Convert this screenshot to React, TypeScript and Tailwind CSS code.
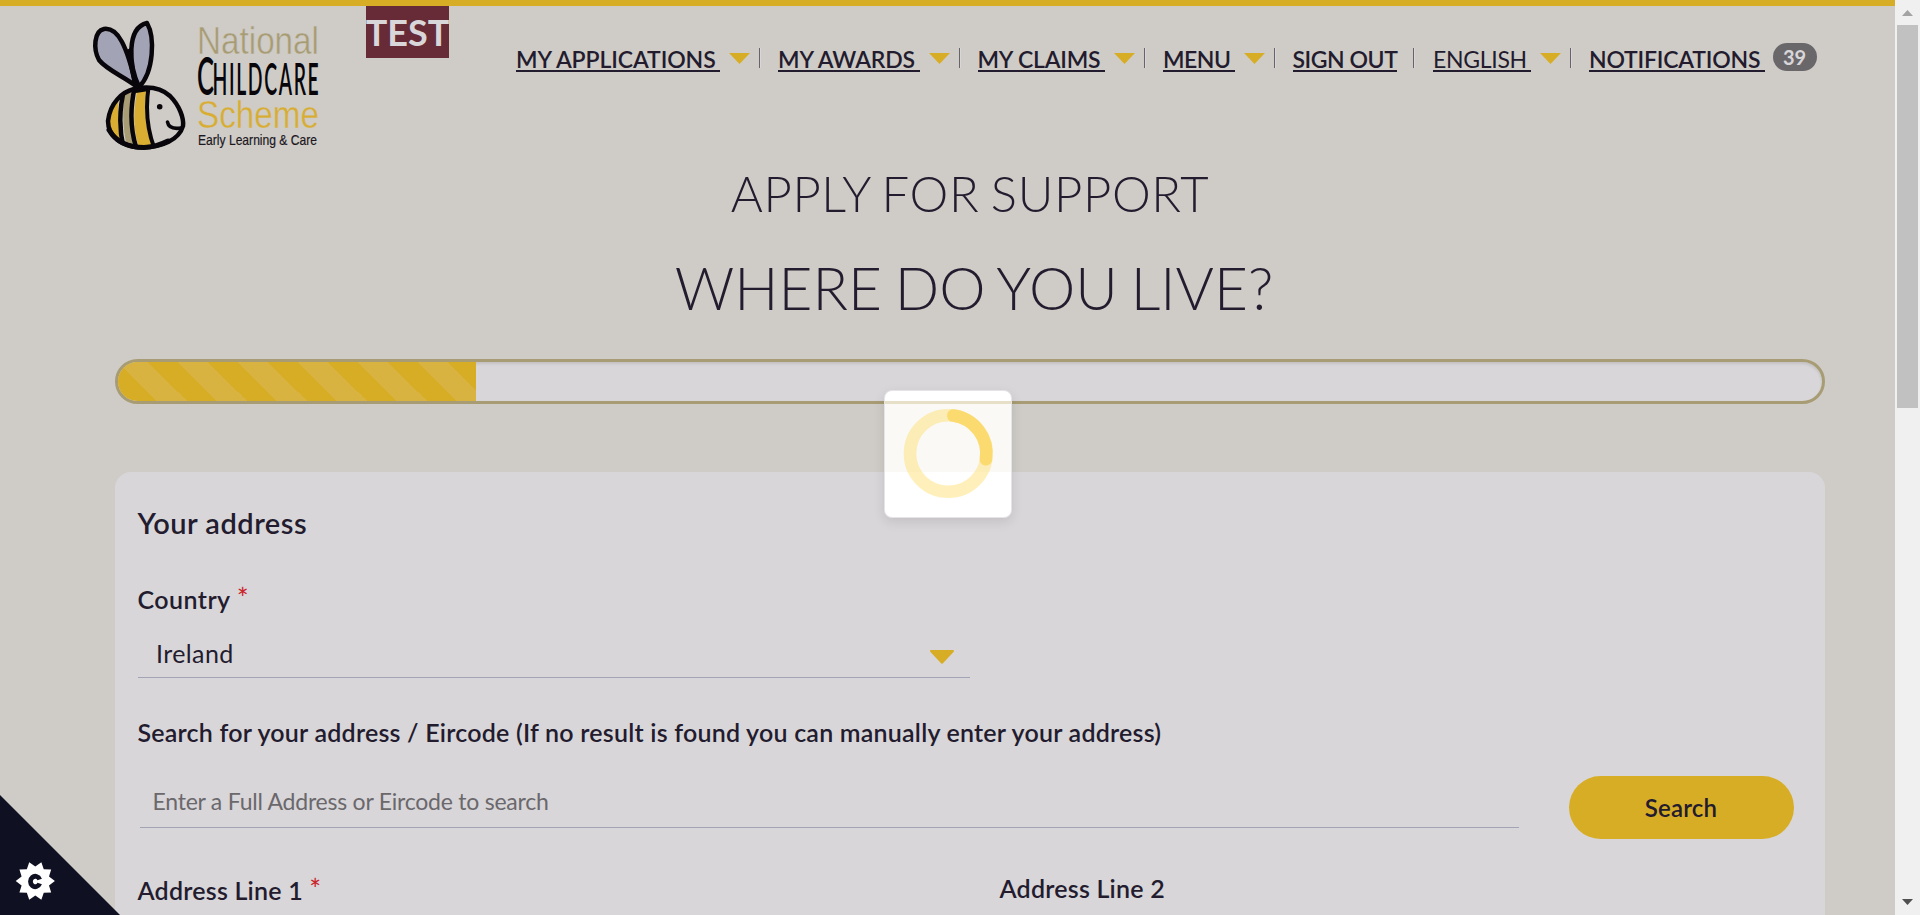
import React from "react";

type NavItem = { label: string; link: string; menu?: boolean; last?: boolean };

const navItems: NavItem[] = [
  { label: "MY APPLICATIONS", link: "w-[204px] font-semibold tracking-[-0.1px]", menu: true },
  { label: "MY AWARDS", link: "w-[141.500px] font-semibold tracking-[-0.15px]", menu: true },
  { label: "MY CLAIMS", link: "w-[127.500px] font-semibold tracking-[-0.2px]", menu: true },
  { label: "MENU", link: "w-[71.500px] font-semibold tracking-[-0.5px]", menu: true },
  { label: "SIGN OUT", link: "w-[104.500px] font-semibold tracking-[-0.45px]" },
  { label: "ENGLISH", link: "w-[98px] font-normal tracking-[-0.3px]", menu: true },
  { label: "NOTIFICATIONS", link: "w-[175.500px] font-semibold tracking-[-0.2px]", last: true },
];

function Logo() {
  return (
    <svg className="block h-[136px] w-[250px]" viewBox="80 16 250 136" aria-label="National Childcare Scheme">
      <defs>
        <clipPath id="body">
          <path d="M108 121C107 103 128 87 150 87C170 88 183 106 184 121C183 139 164 148 145 148C124 148 109 138 108 121Z" />
        </clipPath>
      </defs>
      <g stroke="#08060a" strokeLinejoin="round" strokeLinecap="round" strokeWidth="4.5">
        <path d="M136 86C123 76 107 70 99 60C93 49 94 31 104 29C118 27 127 46 136 86Z" fill="#a3a3b6" />
        <path d="M139 87C129 66 126 28 147 23C155 37 154 72 139 87Z" fill="#a3a3b6" />
        <path d="M127 51L131 49L134 72L139 86L134 85Z" fill="#08060a" strokeWidth="2" />
      </g>
      <g clipPath="url(#body)">
        <path d="M100 85H120C117 105 118 132 122 150H100Z" fill="#d8ad32" />
        <path d="M126 84H134C130 108 131 130 138 150H128C122 130 122 106 126 84Z" fill="#a89c74" />
        <path d="M139 84H147C143 108 145 130 154 150H140C132 130 133 106 139 84Z" fill="#d8ad32" />
        <g fill="none" stroke="#08060a" strokeWidth="4.5">
          <path d="M125 86C119 108 119 130 124 150" />
          <path d="M135 86C130 108 130 130 137 150" />
          <path d="M149 84C145 108 147 130 155 150" strokeWidth="4" />
          <path d="M134 91L147 89" />
        </g>
      </g>
      <g fill="none" stroke="#08060a" strokeLinecap="round">
        <path d="M108 121C110 103 122 92 134 89C148 86 160 87 170 96C180 106 184 119 183 126C179 140 162 147 143 147.500C121 147 108 136 108 121Z" strokeWidth="4.5" />
        <path d="M109 130C118 145 132 147.500 144 147.500C154 147 162 144 168 141" strokeWidth="5" />
        <path d="M167.500 122C168.500 128 174 129 181 128" strokeWidth="3.6" />
      </g>
      <circle cx="159.700" cy="106.700" r="2.800" fill="#08060a" />
      <g fontFamily="'Liberation Sans Narrow', 'Liberation Sans', sans-serif">
        <text x="197" y="53.500" fontSize="38" textLength="122" lengthAdjust="spacingAndGlyphs" fill="#a89c74" stroke="#cfccc7" strokeWidth="0.500">National</text>
        <text x="197" y="128" fontSize="38" textLength="122" lengthAdjust="spacingAndGlyphs" fill="#d8ad32" stroke="#cfccc7" strokeWidth="0.400">Scheme</text>
        <text x="198" y="145" fontSize="15" textLength="119" lengthAdjust="spacingAndGlyphs" fill="#1b171e" stroke="#1b171e" strokeWidth="0.200">Early Learning &amp; Care</text>
      </g>
      <g fontFamily="Lato, sans-serif" fontWeight="600" fill="#08060a">
        <text transform="translate(197 94.500) scale(0.500 1)" fontSize="51">C</text>
        <text transform="translate(212.500 94.500) scale(0.430 1)" fontSize="45" textLength="247" lengthAdjust="spacing">HILDCARE</text>
      </g>
    </svg>
  );
}

function Nav() {
  return (
    <nav className="ml-[67px] flex h-[30px] items-start text-[23px]/[31px]">
      {navItems.map((item) => (
        <div key={item.label} className="flex h-[30px] items-start whitespace-nowrap">
          <a className={`block h-[28px] border-b-2 border-[#231b2e] ${item.link}`}>{item.label}</a>
          {item.menu && (
            <svg className="mt-[9px] ml-[9px] h-[11px] w-[21px]" viewBox="0 0 21 11">
              <path d="M0 0H21L10.500 11Z" fill="#d8ad26" />
            </svg>
          )}
          {!item.last && (
            <span
              className={`mt-1 h-5 w-[2px] border-l border-[#66636a] bg-[#d8d6d9] ${item.menu ? "mr-[17px] ml-[9px]" : "mr-[18px] ml-4"}`}
            />
          )}
        </div>
      ))}
      <span className="-mt-px ml-2 flex h-7 w-11 items-center justify-center rounded-full bg-[#6a676b] text-xl font-bold text-[#d8d6d9]">
        39
      </span>
    </nav>
  );
}

function Star() {
  return <span className="text-[28px] leading-none font-normal text-[#cb2229]">*</span>;
}

function Spinner() {
  return (
    <div className="absolute top-[390px] left-[884px] flex h-32 w-32 items-center justify-center rounded-lg border border-[#e6e4e8] bg-[linear-gradient(to_bottom,#fff_10px,#e7e0c8_10px,#e7e0c8_13px,#faf9f6_13px,#faf9f6_81px,#fff_81px)] shadow-[0_4px_12px_rgba(0,0,0,0.1)]">
      <svg className="h-[126px] w-[126px]" viewBox="885 391 126 126" fill="none" strokeWidth="12.600">
        <circle cx="948.300" cy="453.500" r="38.300" stroke="#ffd43b" strokeOpacity="0.350" />
        <path d="M953.300 415.600A38.300 38.300 0 0 1 985.900 459.200" stroke="#fbdb70" strokeLinecap="round" />
      </svg>
    </div>
  );
}

const burst = Array.from({ length: 20 }, (_, i) => {
  const a = (i * Math.PI) / 10;
  const r = i % 2 === 0 ? 19.6 : 14.4;
  return `${(35.3 + r * Math.cos(a)).toFixed(2)},${(86 + r * Math.sin(a)).toFixed(2)}`;
}).join(" ");

function CookieCorner() {
  return (
    <svg className="absolute bottom-0 left-0 h-[120px] w-[120px]" viewBox="0 0 120 120">
      <path d="M0 0L120 120H0Z" fill="#101023" />
      <polygon points={burst} fill="#fff" />
      <path d="M39.700 84.500A4.800 5.200 0 1 0 39.700 88.500" fill="none" stroke="#101023" strokeWidth="4.800" />
    </svg>
  );
}

function Scrollbar() {
  return (
    <div className="flex h-full w-[25px] flex-col items-center bg-[#f0f0f0]">
      <svg className="h-[25px] w-[25px]" viewBox="0 0 25 25">
        <path d="M7 16H18L12.500 10Z" fill="#a3a3a3" />
      </svg>
      <div className="h-[383px] w-[21px] bg-[#c1c1c1]" />
      <svg className="mt-auto h-[25px] w-[25px]" viewBox="0 0 25 25">
        <path d="M7 9H18L12.500 15Z" fill="#505050" />
      </svg>
    </div>
  );
}

export default function App() {
  return (
    <div className="relative flex h-[915px] w-[1920px] overflow-hidden bg-[#cfccc7] font-[Lato,sans-serif] text-[#231b2e]">
      <div className="flex h-full w-[1895px] flex-col border-t-[6px] border-[#d8ad26]">
        <header className="flex h-[152px] items-start pl-20">
          <div className="w-[286px] pt-[10px]">
            <Logo />
          </div>
          <div className="flex h-[52px] w-[83px] items-center justify-center bg-[#662b36] text-4xl font-bold text-[#d8d6d9]">
            TEST
          </div>
          <div className="pt-[38px]">
            <Nav />
          </div>
        </header>
        <main className="flex flex-1 flex-col pr-[70px] pl-[115px]">
          <h1 className="mt-[5px] h-[60px] text-center text-[49px]/[60px] font-light tracking-[0.65px] [word-spacing:-2.5px]">
            APPLY FOR SUPPORT
          </h1>
          <h2 className="mt-[29px] h-[71px] pl-2 text-center text-[58.500px]/[70px] font-light [word-spacing:-3px]">
            WHERE DO YOU LIVE?
          </h2>
          <div className="mt-9 h-[45px] shrink-0 overflow-hidden rounded-[23px] border-[3px] border-[#a89c74] bg-[#d8d6d9] shadow-[inset_0_2px_3px_rgba(0,0,0,0.1)]">
            <div className="h-full w-[358px] bg-[#d8ad26] bg-[linear-gradient(45deg,rgba(216,214,217,.15)_25%,transparent_25%,transparent_50%,rgba(216,214,217,.15)_50%,rgba(216,214,217,.15)_75%,transparent_75%)] bg-[length:60px_60px]" />
          </div>
          <section className="mt-[68px] h-[443px] shrink-0 rounded-t-2xl bg-[#d8d6d9] pt-[33px] pr-[23px] pl-[22.500px] text-[25px]/[30px] tracking-[0.22px]">
            <h3 className="text-[29px]/[36px] font-semibold tracking-[0.5px]">Your address</h3>
            <div className="mt-[43px] h-[30px] font-semibold tracking-[0.45px]">
              Country <Star />
            </div>
            <div className="mt-4 ml-[0.500px] flex h-12 w-[832px] items-center justify-between border-b border-[#a3a3b6] pr-[15px] pb-px pl-[18px]">
              <span className="tracking-[0.4px]">Ireland</span>
              <svg className="mt-[8px] h-[14px] w-[26px]" viewBox="0 0 26 14">
                <path d="M2 1H24L13 12.800Z" fill="#d8ad26" stroke="#d8ad26" strokeWidth="2" strokeLinejoin="round" />
              </svg>
            </div>
            <div className="mt-[39px] font-semibold whitespace-nowrap">
              Search for your address / Eircode (If no result is found you can manually enter your address)
            </div>
            <div className="mt-[29px] flex h-[63px] items-start">
              <div className="ml-[2.500px] flex h-[52px] w-[1379px] items-center border-b border-[#a3a3b6] pb-0.5 pl-[12.500px] text-[23px] tracking-[-0.23px] text-[#6b686c]">
                Enter a Full Address or Eircode to search
              </div>
              <button className="ml-[49.500px] h-[63px] w-[225px] rounded-full bg-[#d8ad26] text-2xl font-semibold">Search</button>
            </div>
            <div className="mt-[34px] flex font-semibold">
              <div className="h-8 w-[862px] pt-0.5">
                Address Line 1 <Star />
              </div>
              <div>Address Line 2</div>
            </div>
          </section>
        </main>
      </div>
      <Scrollbar />
      <Spinner />
      <CookieCorner />
    </div>
  );
}
